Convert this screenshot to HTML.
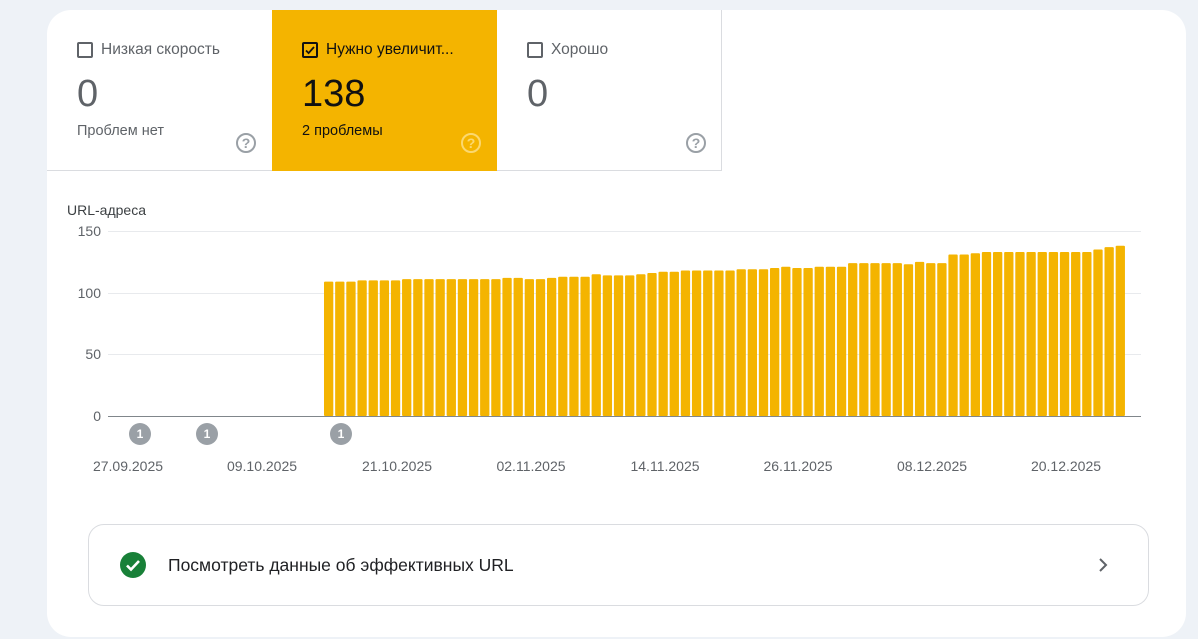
<!DOCTYPE html>
<html><head><meta charset="utf-8"><style>
*{margin:0;padding:0;box-sizing:border-box}
body{width:1198px;height:639px;background:#eef2f7;font-family:"Liberation Sans",sans-serif;position:relative;overflow:hidden}
.card{position:absolute;left:47px;top:10px;width:1139px;height:627px;background:#fff;border-radius:24px}
.tab{position:absolute;top:10px;height:161px;width:225px;border-bottom:1px solid #dadce0}
.t1{left:47px;border-top-left-radius:24px}
.t2{left:272px;background:#f4b400;border-bottom-color:#f4b400}
.t3{left:497px;border-right:1px solid #dadce0}
.lbl{position:absolute;left:30px;top:31px;font-size:15.5px;color:#5f6368;display:flex;align-items:center}
.cb{width:16px;height:16px;border:2px solid #5f6368;border-radius:2px;margin-right:8px;position:relative}
.num{position:absolute;left:30px;top:63px;font-size:38px;color:#5f6368}
.sub{position:absolute;left:30px;top:113px;font-size:14.5px;color:#5f6368}
.q{position:absolute;left:189px;top:123px;width:20px;height:20px;border:2px solid #9aa0a6;border-radius:50%;font-size:14px;font-weight:bold;color:#9aa0a6;text-align:center;line-height:16px}
.t2 .lbl,.t2 .num,.t2 .sub{color:#111}
.t2 .cb{border-color:#111}
.t2 .q{border-color:#fbd870;color:#fbd870}
.link{position:absolute;left:88px;top:524px;width:1061px;height:82px;border:1px solid #dadce0;border-radius:16px}
</style></head><body>
<div class="card"></div>
<div class="tab t1"><div class="lbl"><span class="cb"></span>Низкая скорость</div><div class="num">0</div><div class="sub">Проблем нет</div><div class="q">?</div></div>
<div class="tab t2"><div class="lbl"><span class="cb"><svg width="12" height="12" style="position:absolute;left:0;top:0" viewBox="0 0 12 12"><path d="M2 6.5l2.6 2.6L10 3" stroke="#111" stroke-width="1.8" fill="none"/></svg></span>Нужно увеличит...</div><div class="num">138</div><div class="sub">2 проблемы</div><div class="q">?</div></div>
<div class="tab t3"><div class="lbl"><span class="cb"></span>Хорошо</div><div class="num">0</div><div class="q">?</div></div>
<svg id="ch" width="1198" height="639" style="position:absolute;left:0;top:0" font-family="Liberation Sans, sans-serif">
<text x="67" y="215" font-size="14" fill="#3c4043">URL-адреса</text>
<g stroke="#e8eaed" stroke-width="1"><line x1="108" y1="231.5" x2="1141" y2="231.5"/><line x1="108" y1="293.5" x2="1141" y2="293.5"/><line x1="108" y1="354.5" x2="1141" y2="354.5"/></g>
<g font-size="14" fill="#5f6368" text-anchor="end"><text x="101" y="236">150</text><text x="101" y="298">100</text><text x="101" y="359">50</text><text x="101" y="421">0</text></g>
<g id="bars" fill="#f4b400"></g>
<line x1="108" y1="416.5" x2="1141" y2="416.5" stroke="#80868b"/>
<g fill="#9aa0a6"><circle cx="140" cy="434" r="11"/><circle cx="207" cy="434" r="11"/><circle cx="341" cy="434" r="11"/></g>
<g fill="#fff" font-size="12" font-weight="bold" text-anchor="middle"><text x="140" y="438">1</text><text x="207" y="438">1</text><text x="341" y="438">1</text></g>
<g font-size="14" fill="#5f6368" text-anchor="middle"><text x="128" y="471">27.09.2025</text><text x="262" y="471">09.10.2025</text><text x="397" y="471">21.10.2025</text><text x="531" y="471">02.11.2025</text><text x="665" y="471">14.11.2025</text><text x="798" y="471">26.11.2025</text><text x="932" y="471">08.12.2025</text><text x="1066" y="471">20.12.2025</text></g>
</svg>
<div class="link"></div>
<svg width="26" height="26" style="position:absolute;left:120px;top:552px" viewBox="0 0 26 26"><circle cx="13" cy="13" r="13" fill="#188038"/><path d="M7 13.5l4 4 8-8.5" stroke="#fff" stroke-width="2.6" fill="none"/></svg>
<div style="position:absolute;left:168px;top:555px;font-size:17.5px;color:#202124">Посмотреть данные об эффективных URL</div>
<svg width="12" height="16" style="position:absolute;left:1097px;top:557px" viewBox="0 0 12 16"><path d="M3 2l6 6-6 6" stroke="#5f6368" stroke-width="2" fill="none"/></svg>
<script>
var v=[109,109,109,110,110,110,110,111,111,111,111,111,111,111,111,111,112,112,111,111,112,113,113,113,115,114,114,114,115,116,117,117,118,118,118,118,118,119,119,119,120,121,120,120,121,121,121,124,124,124,124,124,123,125,124,124,131,131,132,133,133,133,133,133,133,133,133,133,133,135,137,138];
var g=document.getElementById('bars'),s='';
for(var i=0;i<v.length;i++){var h=v[i]*1.233,x=324+i*11.15;s+='<rect x="'+x.toFixed(2)+'" y="'+(416-h).toFixed(1)+'" width="9.3" height="'+h.toFixed(1)+'" rx="1"/>';}
g.innerHTML=s;
</script>
</body></html>
